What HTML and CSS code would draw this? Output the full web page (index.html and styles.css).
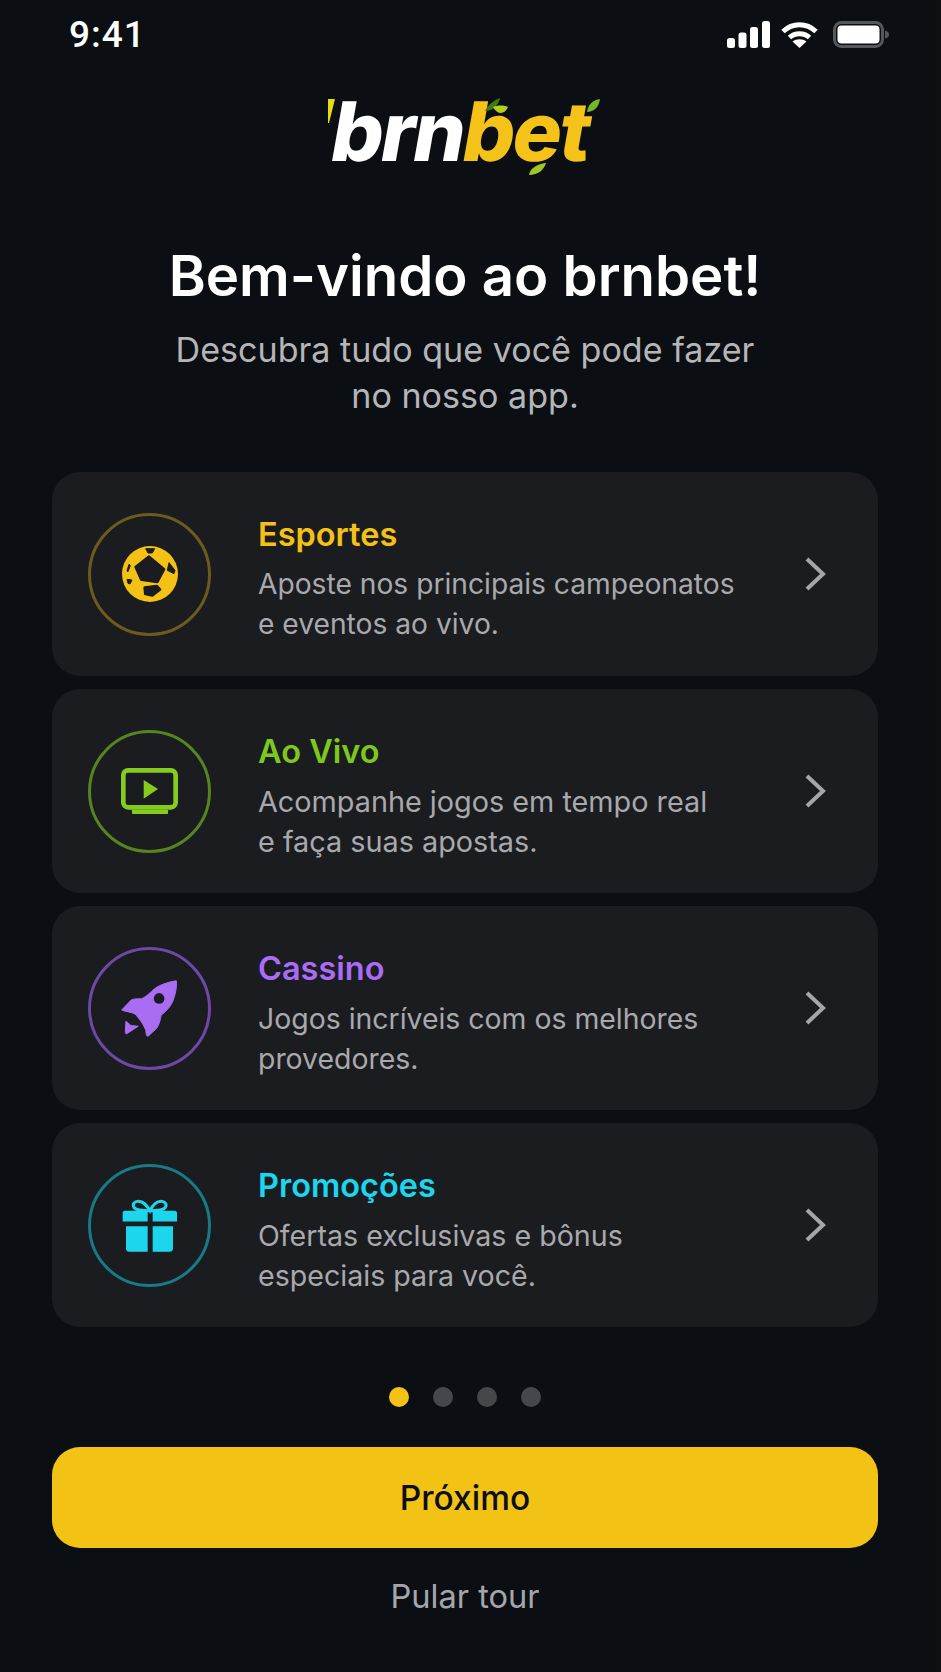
FILE: index.html
```html
<!DOCTYPE html>
<html lang="pt-BR">
<head>
<meta charset="utf-8">
<title>brnbet</title>
<link rel="stylesheet" href="styles.css">
</head>
<body>
<main class="screen">
  <header class="status">
    <span class="time">9:41</span>
    <div class="status-icons">
      <svg class="signal" viewBox="0 0 43 27" aria-hidden="true"><rect x="0" y="17" width="8" height="10" rx="2.5"/><rect x="11.500" y="11.500" width="8" height="15.500" rx="2.500"/><rect x="23" y="6" width="8" height="21" rx="2.500"/><rect x="35" y="0" width="8" height="27" rx="2.500"/></svg>
      <svg class="wifi" viewBox="0 0 37 27" aria-hidden="true"><path class="wifi-arc" d="M2 10.500C11.500 1.500 25.500 1.500 35 10.500M8.500 16.500C14 11.500 23 11.500 28.500 16.500"/><path class="wifi-dot" d="M18.500 27L11.500 20.500C15.500 17.500 21.500 17.500 25.500 20.500Z"/></svg>
      <svg class="battery" viewBox="0 0 56 27" aria-hidden="true"><rect class="battery-shell" x="1.500" y="1.500" width="48" height="24" rx="7"/><rect class="battery-fill" x="4.500" y="4.500" width="42" height="18" rx="4"/><path class="battery-nub" d="M52 9.500C55 10 56 12 56 13.500C56 15 55 17 52 17.500Z"/></svg>
    </div>
  </header>

  <div class="logo">
    <span class="logo-word"><span class="logo-white">brn</span><span class="logo-gold">bet</span></span>
    <svg class="logo-marks" viewBox="0 0 280 80" aria-hidden="true">
      <path fill="#e6dc12" d="M0 1H7L1 25H0Z"/>
      <path fill="#3f7a14" d="M157 13C160 7 166 2 172 0C171 6 166 13 157 13Z"/>
      <path fill="#b6cf1e" d="M165 9C170 7 176 7 180 9C177 16 170 18 165 9Z"/>
      <path fill="#74b62a" d="M259 14C260 6 265 2 272 1C271 9 266 14 259 14Z"/>
      <path fill="#a0c824" d="M201 77C202 71 208 66 218 65C216 72 210 77 201 77Z"/>
    </svg>
  </div>

  <h1 class="title">Bem-vindo ao brnbet!</h1>
  <p class="subtitle">Descubra tudo que você pode fazer<br>no nosso app.</p>

  <section class="cards">
    <article class="card card-gold">
      <div class="ring">
        <svg class="icon-ball" viewBox="0 0 168 168" aria-hidden="true">
          <circle class="fill" cx="84" cy="84" r="84"/>
          <path class="cut" d="M81 32L126 70L106 108L58 101L41 63Z"/>
          <path class="cut" d="M68 125L104 120L114 130L91 148L70 144Z"/>
          <path class="cut thin" d="M71 8H98L91 21H78Z"/>
          <path class="cut thin" d="M141 50L159 73L156 83L136 73Z"/>
          <path class="cut thin" d="M21 55L15 75L18 77L25 58Z"/>
          <path class="cut thin" d="M15 100L30 102L24 114L18 112Z"/>
        </svg>
      </div>
      <div class="copy">
        <h2 class="card-title">Esportes</h2>
        <p class="card-text">Aposte nos principais campeonatos<br>e eventos ao vivo.</p>
      </div>
      <svg class="chevron" viewBox="0 0 24 36" aria-hidden="true"><path d="M4 3L20 18L4 33"/></svg>
    </article>

    <article class="card card-green">
      <div class="ring">
        <svg class="icon-tv" viewBox="0 0 171 138" aria-hidden="true">
          <rect class="outline" x="7" y="7" width="157" height="111" rx="14"/>
          <rect class="fill" x="33" y="125" width="108" height="13" rx="2"/>
          <path class="fill" d="M68 36L111 63L68 92Z"/>
        </svg>
      </div>
      <div class="copy">
        <h2 class="card-title">Ao Vivo</h2>
        <p class="card-text">Acompanhe jogos em tempo real<br>e faça suas apostas.</p>
      </div>
      <svg class="chevron" viewBox="0 0 24 36" aria-hidden="true"><path d="M4 3L20 18L4 33"/></svg>
    </article>

    <article class="card card-purple">
      <div class="ring">
        <svg class="icon-rocket" viewBox="0 0 175 180" aria-hidden="true">
          <path class="fill" d="M170 8C145 12 115 20 95 40C88 47 72 60 65 62C48 62 33 62 28 72L5 96C18 102 35 102 45 108C55 118 72 140 78 158C79 172 80 176 85 175L110 152C118 142 122 125 124 112C145 95 158 78 162 62C168 45 172 25 170 8Z"/>
          <circle class="hole" cx="118" cy="61" r="16"/>
          <path class="fill" d="M18 130L32 142C38 144 48 144 55 145L20 168C17 168 16 165 16 160Z"/>
        </svg>
      </div>
      <div class="copy">
        <h2 class="card-title">Cassino</h2>
        <p class="card-text">Jogos incríveis com os melhores<br>provedores.</p>
      </div>
      <svg class="chevron" viewBox="0 0 24 36" aria-hidden="true"><path d="M4 3L20 18L4 33"/></svg>
    </article>

    <article class="card card-cyan">
      <div class="ring">
        <svg class="icon-gift" viewBox="0 0 165 158" aria-hidden="true">
          <path class="outline-thin" d="M84 35C74 18 65 6 49 6C37 6 30 16 36 25C42 33 62 35 84 35C106 35 124 33 130 25C136 16 129 6 117 6C101 6 92 18 84 35Z"/>
          <path class="fill" d="M8 35H77V67H2V41C2 38 5 35 8 35Z"/>
          <path class="fill" d="M92 35H159C162 35 165 38 165 41V67H92Z"/>
          <path class="fill" d="M12 81H77V158H22C16 158 12 154 12 148Z"/>
          <path class="fill" d="M92 81H153V148C153 154 149 158 143 158H92Z"/>
        </svg>
      </div>
      <div class="copy">
        <h2 class="card-title">Promoções</h2>
        <p class="card-text">Ofertas exclusivas e bônus<br>especiais para você.</p>
      </div>
      <svg class="chevron" viewBox="0 0 24 36" aria-hidden="true"><path d="M4 3L20 18L4 33"/></svg>
    </article>
  </section>

  <div class="dots">
    <span class="dot dot-active"></span>
    <span class="dot"></span>
    <span class="dot"></span>
    <span class="dot"></span>
  </div>

  <button class="next" type="button">Próximo</button>
  <button class="skip" type="button">Pular tour</button>
</main>
</body>
</html>
```
FILE: styles.css
```css
* { box-sizing: border-box; margin: 0; padding: 0; }

html, body { height: 100%; }

body {
  background: #0e0f12;
  font-family: "Inter", "Liberation Sans", sans-serif;
  overflow: hidden;
}

.screen {
  width: 930px;
  height: 1672px;
  background: #0b0e12;
  padding: 0 52px;
  display: flex;
  flex-direction: column;
  align-items: stretch;
}

/* Status bar */
.status {
  height: 70px;
  padding: 20px 0 0 17px;
  display: flex;
  justify-content: space-between;
  align-items: flex-start;
  color: #fff;
}

.time {
  font-family: "Roboto", "Liberation Sans", sans-serif;
  font-size: 37px;
  font-weight: 500;
  line-height: 30px;
  letter-spacing: 1px;
}

.status-icons {
  display: flex;
  align-items: center;
  margin-top: 1px;
  margin-right: -11px;
}

.signal { width: 43px; height: 27px; fill: #fff; margin-right: 11px; }
.wifi { width: 37px; height: 27px; margin-right: 15px; }
.wifi-arc { fill: none; stroke: #fff; stroke-width: 5; }
.wifi-dot { fill: #fff; }
.battery { width: 56px; height: 27px; }
.battery-shell { fill: none; stroke: #55575a; stroke-width: 3; }
.battery-fill { fill: #fff; }
.battery-nub { fill: #55575a; }

/* Logo */
.logo {
  position: relative;
  align-self: center;
  width: 272px;
  height: 78px;
  margin-top: 23px;
  margin-left: -8px;
}

.logo-word {
  display: block;
  font-size: 82px;
  font-weight: 800;
  line-height: 78px;
  letter-spacing: -2.500px;
  white-space: nowrap;
  text-align: center;
  transform: skewX(-10deg);
}

.logo-white { color: #fff; }
.logo-gold { color: #f4c218; }

.logo-marks {
  position: absolute;
  left: 3px;
  top: 5px;
  width: 280px;
  height: 80px;
}

/* Heading */
.title {
  margin-top: 73px;
  text-align: center;
  color: #fff;
  font-size: 56.300px;
  font-weight: 600;
  line-height: 64px;
}

.subtitle {
  margin-top: 19px;
  text-align: center;
  color: #b5b5b8;
  font-size: 34.100px;
  font-weight: 400;
  line-height: 46px;
}

/* Cards */
.cards {
  margin-top: 53px;
  display: flex;
  flex-direction: column;
  gap: 13px;
}

.card {
  height: 204px;
  padding: 0 51px 0 36px;
  display: flex;
  align-items: center;
  background: #1a1c20;
  border-radius: 28px;
}

.ring {
  flex: none;
  width: 123px;
  height: 123px;
  border-radius: 50%;
  border: 3px solid;
  display: flex;
  align-items: center;
  justify-content: center;
}

.copy {
  flex: 1;
  margin-left: 47px;
  padding-top: 11px;
}

.card-title {
  font-size: 32.500px;
  font-weight: 600;
  line-height: 40px;
}

.card-text {
  margin-top: 10px;
  color: #a9a9ad;
  font-size: 28.200px;
  font-weight: 400;
  line-height: 39.500px;
}

.chevron {
  flex: none;
  width: 24px;
  height: 36px;
  fill: none;
  stroke: #a5a6a9;
  stroke-width: 4;
}

.card-gold .ring { border-color: #6d5b1e; }
.card-gold .card-title { color: #f4c214; }
.card-green .ring { border-color: #56851f; }
.card-green .card-title { color: #7ec81e; }
.card-green .card-text { font-size: 28.800px; }
.card-purple .ring { border-color: #6d48a4; }
.card-purple .card-title { color: #ab6cf5; }
.card-purple .card-text { font-size: 28.400px; }
.card-cyan .ring { border-color: #187a85; }
.card-cyan .card-title { color: #1cd6ee; }
.card-cyan .card-text { font-size: 28.600px; }

.icon-ball { width: 56px; height: 56px; }
.icon-ball .fill { fill: #f4c214; }
.icon-ball .cut { fill: #1a1c20; stroke: #1a1c20; stroke-width: 8; stroke-linejoin: round; }
.icon-ball .thin { stroke-width: 3; }

.icon-tv { width: 57px; height: 46px; }
.icon-tv .outline { fill: none; stroke: #84cc1e; stroke-width: 14; }
.icon-tv .fill { fill: #84cc1e; }

.icon-rocket { width: 58px; height: 60px; margin-right: 2px; }
.icon-rocket .fill { fill: #a96cf2; stroke: #a96cf2; stroke-width: 3; stroke-linejoin: round; }
.icon-rocket .hole { fill: #1a1c20; }

.icon-gift { width: 55px; height: 53px; }
.icon-gift .fill { fill: #1cd6ee; }
.icon-gift .outline-thin { fill: none; stroke: #1cd6ee; stroke-width: 9; }

/* Pager */
.dots {
  margin-top: 60px;
  display: flex;
  justify-content: center;
  gap: 24px;
}

.dot {
  width: 20px;
  height: 20px;
  border-radius: 50%;
  background: #45474b;
}

.dot-active { background: #f4c214; }

/* Actions */
.next {
  margin-top: 40px;
  height: 101px;
  border: 0;
  border-radius: 28px;
  background: #f2c215;
  color: #0b0e12;
  font-family: inherit;
  font-size: 33.500px;
  font-weight: 500;
}

.skip {
  margin-top: 26px;
  height: 44px;
  border: 0;
  background: none;
  color: #a5a6aa;
  font-family: inherit;
  font-size: 32.600px;
  font-weight: 400;
}
```
